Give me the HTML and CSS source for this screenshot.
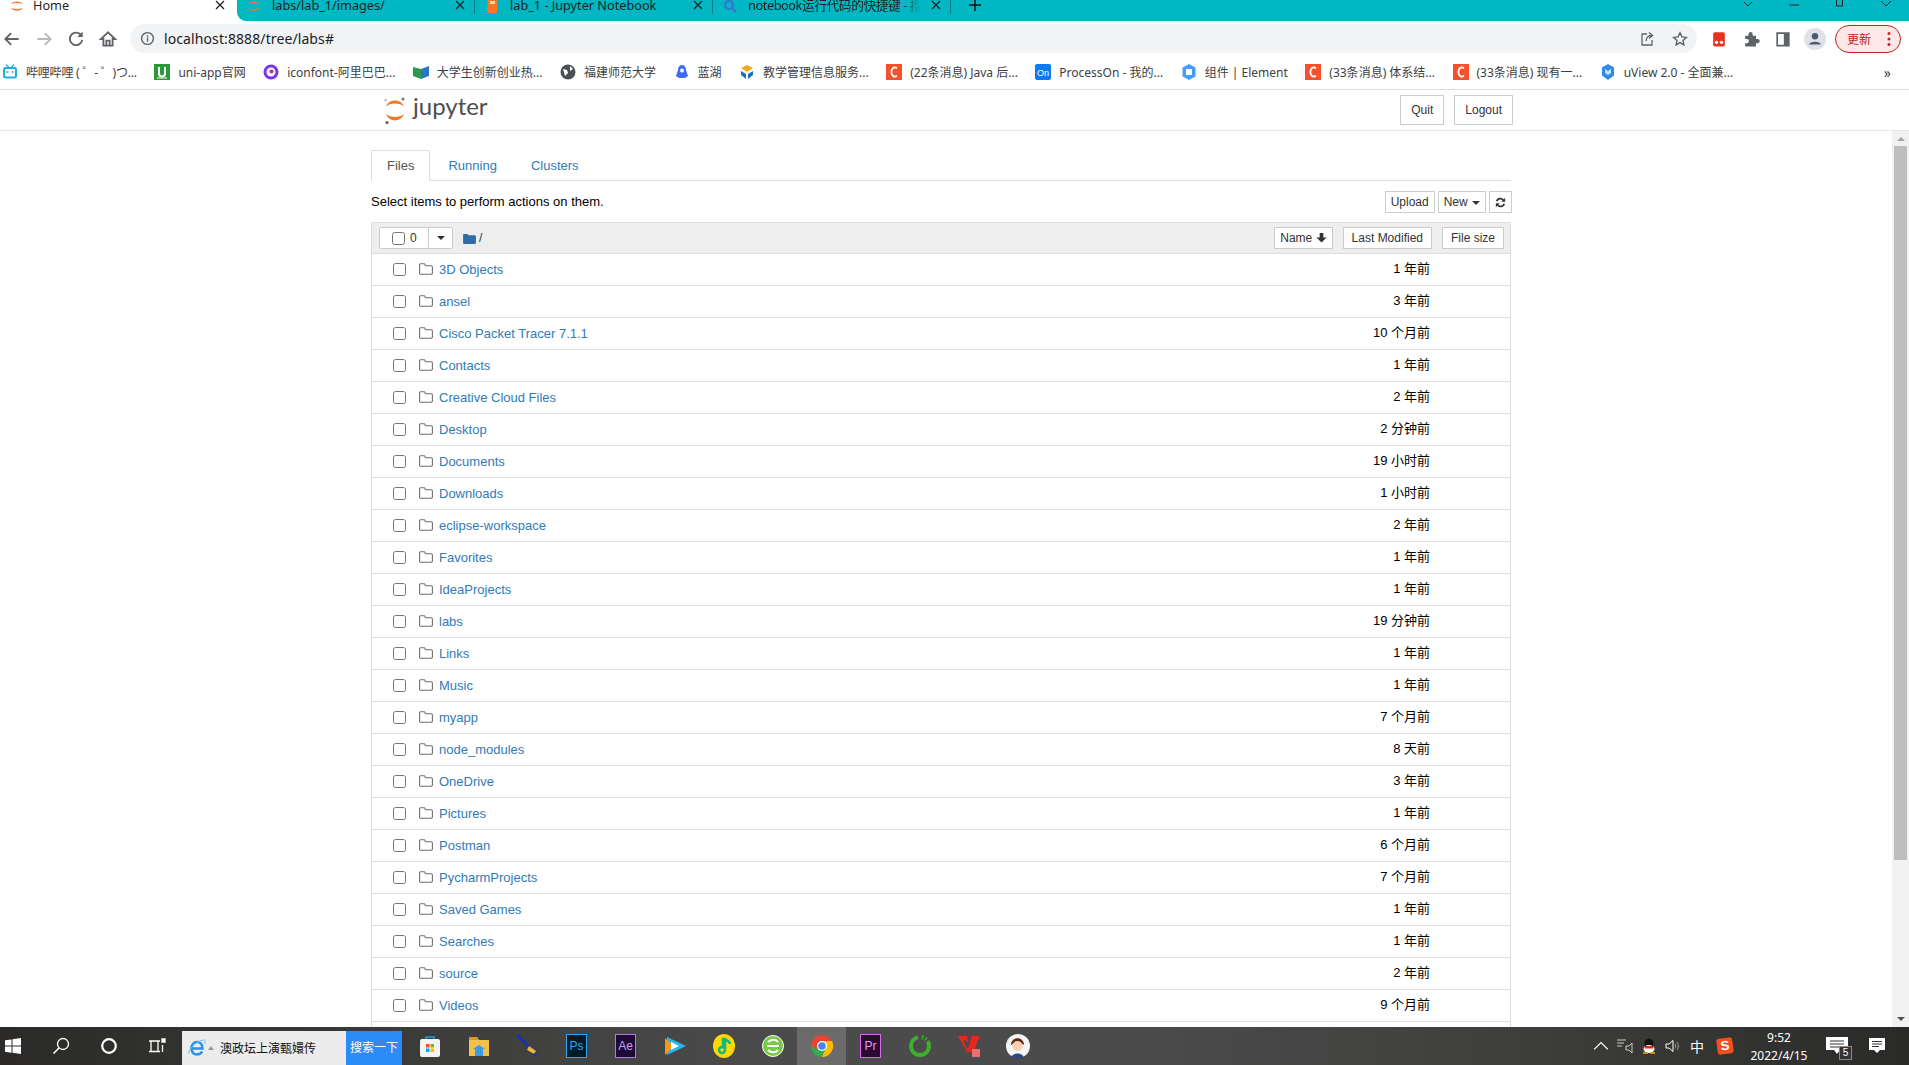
FILE: index.html
```html
<!DOCTYPE html>
<html lang="zh">
<head>
  <meta charset="UTF-8" />
  <title>Home</title>
  <link rel="stylesheet" href="styles.css">
</head>
<body>

  <!-- shared icons -->
  <svg class="sprite">
    <symbol id="close" viewBox="0 0 10 10"><path d="M1 1l8 8M9 1l-8 8" fill="none" stroke="currentColor" stroke-width="1.3"/></symbol>
    <symbol id="folder" viewBox="0 0 14 12"><path d="M.6 2.5V10a1.2 1.2 0 0 0 1.2 1.3h10.4a1.2 1.2 0 0 0 1.2-1.3V4a1.2 1.2 0 0 0-1.2-1.2H6.6L5.4.7H1.8A1.2 1.2 0 0 0 .6 2.5z" fill="none" stroke="currentColor" stroke-width="1.1"/></symbol>
    <symbol id="cfav" viewBox="0 0 16 16"><rect width="16" height="16" fill="#f4512c"/><path d="M11 4.2C8.6 2.6 5.4 3.6 5.4 8s3.2 5.4 5.6 3.8" fill="none" stroke="#fff" stroke-width="1.8"/></symbol>
    <symbol id="jup" viewBox="0 0 16 16"><path d="M2 6.4C4 2.6 12 2.6 14 6.4 11 4.6 5 4.6 2 6.4zM2 9.8C5 11.6 11 11.6 14 9.8 12 13.6 4 13.6 2 9.8z" fill="#f37726"/></symbol>
  </svg>

  <div class="tabstrip">
    <div class="tab tab-active">
      <svg class="fav"><use href="#jup"/></svg>
      <span class="tab-title">Home</span>
      <svg class="tab-close"><use href="#close"/></svg>
    </div>
    <div class="tab-rest">
      <div class="tab tab-sep">
        <svg class="fav"><use href="#jup"/></svg>
        <span class="tab-title">labs/lab_1/images/</span>
        <svg class="tab-close"><use href="#close"/></svg>
      </div>
      <div class="tab tab-sep">
        <svg class="fav" viewBox="0 0 16 16"><path d="M4 1h9v14H3z" fill="#f37726"/><path d="M6 3h5v3H6z" fill="#fbd38a"/></svg>
        <span class="tab-title">lab_1 - Jupyter Notebook</span>
        <svg class="tab-close"><use href="#close"/></svg>
      </div>
      <div class="tab tab-sep">
        <svg class="fav" viewBox="0 0 16 16"><circle cx="7" cy="7" r="4" fill="none" stroke="#3b6fd8" stroke-width="2"/><path d="M10 10l4 4" stroke="#3b6fd8" stroke-width="2"/></svg>
        <span class="tab-title tab-fade">notebook运行代码的快捷键 - 搜索</span>
        <svg class="tab-close"><use href="#close"/></svg>
      </div>
      <svg class="newtab" viewBox="0 0 12 12"><path d="M6 0v12M0 6h12" stroke="#111" stroke-width="1.5"/></svg>
      <div class="winctl">
        <svg viewBox="0 0 12 12"><path d="M2 2l4 4 4-4" fill="none" stroke="#222"/></svg>
        <svg viewBox="0 0 12 12"><path d="M1 5h10" stroke="#222"/></svg>
        <svg viewBox="0 0 12 12"><path d="M2.500 0v6h6V0M4 0V-1" fill="none" stroke="#222"/></svg>
        <svg viewBox="0 0 12 12"><path d="M1 6l5-5 5 5" fill="none" stroke="#222" transform="rotate(180 6 3.500)"/></svg>
      </div>
    </div>
  </div>

  <div class="toolbar">
    <svg class="navbtn" viewBox="0 0 24 24"><path d="M20 12H5m6-7l-7 7 7 7" fill="none" stroke="#5f6368" stroke-width="2.200"/></svg>
    <svg class="navbtn" viewBox="0 0 24 24"><path d="M4 12h15m-6-7l7 7-7 7" fill="none" stroke="#b6b8ba" stroke-width="2.200"/></svg>
    <svg class="navbtn" viewBox="0 0 24 24"><path d="M18.500 8A7.500 7.500 0 1 0 19.500 13" fill="none" stroke="#5f6368" stroke-width="2.200"/><path d="M20 3v6.500h-6.500z" fill="#5f6368"/></svg>
    <svg class="navbtn" viewBox="0 0 24 24"><path d="M12 4L3.500 12H6.500v8h11v-8H20.500zM10 20v-6h4v6" fill="none" stroke="#5f6368" stroke-width="2.200"/></svg>
    <div class="omnibox">
      <svg class="omni-info" viewBox="0 0 16 16"><circle cx="8" cy="8" r="6.300" fill="none" stroke="#5f6368" stroke-width="1.500"/><path d="M8 7v4.500M8 4.500v1.500" stroke="#5f6368" stroke-width="1.500"/></svg>
      <span class="omni-url">localhost:8888/tree/labs#</span>
      <svg class="omni-act" viewBox="0 0 16 16"><path d="M8 3H3v11h10V9M7 10c0-4 3-5.500 5.500-5.500M10 1.500l3.500 3-3.500 3" fill="none" stroke="#5f6368" stroke-width="1.300"/></svg>
      <svg class="omni-act" viewBox="0 0 16 16"><path d="M8 1.800l1.900 4.100 4.400.5-3.300 3 .9 4.400L8 11.600l-3.900 2.200.9-4.400-3.300-3 4.400-.5z" fill="none" stroke="#5f6368" stroke-width="1.400"/></svg>
    </div>
    <svg class="navbtn navbtn-first" viewBox="0 0 24 24"><rect x="5" y="4" width="14" height="17" rx="2" fill="#e8321f"/><circle cx="9" cy="16" r="2" fill="#fff"/><circle cx="15" cy="16" r="2" fill="#fff"/></svg>
    <svg class="navbtn" viewBox="0 0 24 24"><path d="M5 8h4V6a2.500 2.500 0 0 1 5 0v2h4v4h2a2.500 2.500 0 0 1 0 5h-2v4H5v-4h2a2.500 2.500 0 0 0 0-5H5z" fill="#5f6368"/></svg>
    <svg class="navbtn" viewBox="0 0 24 24"><path d="M5 5h14v15H5z" fill="none" stroke="#5f6368" stroke-width="2"/><path d="M13 5h6v15h-6z" fill="#5f6368"/></svg>
    <svg class="navbtn navbtn-avatar" viewBox="0 0 24 24"><circle cx="12" cy="12" r="12" fill="#dee1e6"/><circle cx="12" cy="9" r="3.500" fill="#4e5a6b"/><path d="M5.500 18c1-4 12-4 13 0z" fill="#4e5a6b"/></svg>
    <div class="update-pill">
      <span>更新</span>
      <svg viewBox="0 0 4 16"><circle cx="2" cy="2.500" r="1.500"/><circle cx="2" cy="8" r="1.500"/><circle cx="2" cy="13.500" r="1.500"/></svg>
    </div>
  </div>

  <div class="bookmarks">
    <a class="bm bm-tight"><svg viewBox="0 0 16 16"><path d="M4 .500l2.500 2.500M12 .500L9.500 3" stroke="#23ade5" stroke-width="1.300"/><rect x="1" y="3" width="14" height="11.500" rx="2.500" fill="#23ade5"/><rect x="3" y="5" width="10" height="7.500" rx="1" fill="#fff"/><circle cx="5.500" cy="8" r="1" fill="#23ade5"/><circle cx="10.500" cy="8" r="1" fill="#23ade5"/></svg>哔哩哔哩 ( ゜- ゜)つ...</a>
    <a class="bm"><svg viewBox="0 0 16 16"><rect width="16" height="16" fill="#2b9939"/><path d="M5 3v6.500a3 3 0 0 0 6 0V3" fill="none" stroke="#fff" stroke-width="2"/><path d="M3 14h10" stroke="#fff"/></svg>uni-app官网</a>
    <a class="bm"><svg viewBox="0 0 16 16"><circle cx="8" cy="8" r="7.500" fill="#7a35e8"/><circle cx="8" cy="8" r="4.500" fill="#fff"/><circle cx="8.500" cy="7.500" r="2" fill="#d4237a"/></svg>iconfont-阿里巴巴...</a>
    <a class="bm"><svg viewBox="0 0 16 16"><path d="M0 3l8 2v10l-8-3z" fill="#2d9a4a"/><path d="M8 5l8-3v10l-8 3z" fill="#2a76c6"/></svg>大学生创新创业热...</a>
    <a class="bm"><svg viewBox="0 0 16 16"><circle cx="8" cy="8" r="7.500" fill="#4a4f55"/><path d="M3 5l4 1 1 3-3 3zM10 2l3 3-3 2z" fill="#fff"/></svg>福建师范大学</a>
    <a class="bm"><svg viewBox="0 0 16 16"><path d="M8 1c3 0 4 3 4 5l2 6-3 2H5l-3-2 2-6c0-2 1-5 4-5z" fill="#3d6df2"/><circle cx="8" cy="6.500" r="2" fill="#fff"/></svg>蓝湖</a>
    <a class="bm"><svg viewBox="0 0 16 16"><path d="M8 1l6 3-6 4-6-4z" fill="#f2a81d"/><path d="M2 7l5 3v5L2 11z" fill="#1d6fc4"/><path d="M14 7l-5 3v5l5-4z" fill="#1d6fc4"/></svg>教学管理信息服务...</a>
    <a class="bm"><svg><use href="#cfav"/></svg>(22条消息) Java 后...</a>
    <a class="bm"><svg viewBox="0 0 16 16"><rect width="16" height="16" rx="2" fill="#0c7bf3"/><text x="8" y="11.500" class="bm-on">On</text></svg>ProcessOn - 我的...</a>
    <a class="bm"><svg viewBox="0 0 16 16"><path d="M8 0l6.500 3.500v9L8 16l-6.500-3.500v-9z" fill="#409eff"/><path d="M5 5h6v6H5z" fill="#fff"/></svg>组件 | Element</a>
    <a class="bm"><svg><use href="#cfav"/></svg>(33条消息) 体系结...</a>
    <a class="bm"><svg><use href="#cfav"/></svg>(33条消息) 现有一...</a>
    <a class="bm"><svg viewBox="0 0 16 16"><path d="M8 0l6 3.500v8L8 16l-6-4.500v-8z" fill="#2f8ce8"/><path d="M5 5l3 2 3-2v4l-3 2-3-2z" fill="#bfe3ff"/></svg>uView 2.0 - 全面兼...</a>
    <span class="bm-more">»</span>
  </div>

  <div class="site">
    <header class="site-header">
      <div class="logo">
        <svg viewBox="0 0 22 27"><path d="M2 9.500C5 1.500 17 1.500 20 9.500 16 5.500 6 5.500 2 9.500zM2 17C6 21 16 21 20 17 17 25.500 5 25.500 2 17z" fill="#f37726"/><circle cx="19" cy="2" r="1.500" fill="#767677"/><circle cx="1.500" cy="3" r="1" fill="#9e9e9e"/><circle cx="3" cy="25.500" r="1.600" fill="#616262"/></svg>
        <span class="logo-text">jupyter</span>
      </div>
      <div class="header-btns">
        <button class="btn btn-head">Quit</button>
        <button class="btn btn-head">Logout</button>
      </div>
    </header>

    <div class="site-body">
      <main class="container">
        <ul class="nav-tabs">
          <li class="active"><a>Files</a></li>
          <li><a>Running</a></li>
          <li><a>Clusters</a></li>
        </ul>

        <div class="actions">
          <span class="actions-text">Select items to perform actions on them.</span>
          <div class="actions-btns">
            <button class="btn">Upload</button>
            <button class="btn">New <i class="caret"></i></button>
            <button class="btn btn-icon"><svg viewBox="0 0 14 14"><path d="M2 5.500a5 5 0 0 1 8.500-2L12 2v4.200H7.800l1.500-1.500A3.300 3.300 0 0 0 3.800 5.800zM12 8.500a5 5 0 0 1-8.500 2L2 12V7.800h4.200L4.700 9.300a3.300 3.300 0 0 0 5.500-1.100z" fill="#333"/></svg></button>
          </div>
        </div>

        <div class="list">
          <div class="list-head">
            <div class="select-group">
              <span class="select-main"><input type="checkbox"> 0</span>
              <span class="select-drop"><i class="caret"></i></span>
            </div>
            <svg class="crumb-folder" viewBox="0 0 14 12"><path d="M0 2a1 1 0 0 1 1-1h4l1 1.500h7a1 1 0 0 1 1 1V11a1 1 0 0 1-1 1H1a1 1 0 0 1-1-1z" fill="#2f6da8"/></svg>
            <span class="crumb">/</span>
            <div class="sort-btns">
              <button class="btn">Name <svg class="sort-arrow" viewBox="0 0 12 12"><path d="M4 1h4v5h3.500L6 11.500.5 6H4z" fill="#333"/></svg></button>
              <button class="btn btn-wide">Last Modified</button>
              <button class="btn btn-wide">File size</button>
            </div>
          </div>

          <div class="row"><input type="checkbox"><svg class="folder"><use href="#folder"/></svg><a class="name">3D Objects</a><span class="when">1 年前</span></div>
          <div class="row"><input type="checkbox"><svg class="folder"><use href="#folder"/></svg><a class="name">ansel</a><span class="when">3 年前</span></div>
          <div class="row"><input type="checkbox"><svg class="folder"><use href="#folder"/></svg><a class="name">Cisco Packet Tracer 7.1.1</a><span class="when">10 个月前</span></div>
          <div class="row"><input type="checkbox"><svg class="folder"><use href="#folder"/></svg><a class="name">Contacts</a><span class="when">1 年前</span></div>
          <div class="row"><input type="checkbox"><svg class="folder"><use href="#folder"/></svg><a class="name">Creative Cloud Files</a><span class="when">2 年前</span></div>
          <div class="row"><input type="checkbox"><svg class="folder"><use href="#folder"/></svg><a class="name">Desktop</a><span class="when">2 分钟前</span></div>
          <div class="row"><input type="checkbox"><svg class="folder"><use href="#folder"/></svg><a class="name">Documents</a><span class="when">19 小时前</span></div>
          <div class="row"><input type="checkbox"><svg class="folder"><use href="#folder"/></svg><a class="name">Downloads</a><span class="when">1 小时前</span></div>
          <div class="row"><input type="checkbox"><svg class="folder"><use href="#folder"/></svg><a class="name">eclipse-workspace</a><span class="when">2 年前</span></div>
          <div class="row"><input type="checkbox"><svg class="folder"><use href="#folder"/></svg><a class="name">Favorites</a><span class="when">1 年前</span></div>
          <div class="row"><input type="checkbox"><svg class="folder"><use href="#folder"/></svg><a class="name">IdeaProjects</a><span class="when">1 年前</span></div>
          <div class="row"><input type="checkbox"><svg class="folder"><use href="#folder"/></svg><a class="name">labs</a><span class="when">19 分钟前</span></div>
          <div class="row"><input type="checkbox"><svg class="folder"><use href="#folder"/></svg><a class="name">Links</a><span class="when">1 年前</span></div>
          <div class="row"><input type="checkbox"><svg class="folder"><use href="#folder"/></svg><a class="name">Music</a><span class="when">1 年前</span></div>
          <div class="row"><input type="checkbox"><svg class="folder"><use href="#folder"/></svg><a class="name">myapp</a><span class="when">7 个月前</span></div>
          <div class="row"><input type="checkbox"><svg class="folder"><use href="#folder"/></svg><a class="name">node_modules</a><span class="when">8 天前</span></div>
          <div class="row"><input type="checkbox"><svg class="folder"><use href="#folder"/></svg><a class="name">OneDrive</a><span class="when">3 年前</span></div>
          <div class="row"><input type="checkbox"><svg class="folder"><use href="#folder"/></svg><a class="name">Pictures</a><span class="when">1 年前</span></div>
          <div class="row"><input type="checkbox"><svg class="folder"><use href="#folder"/></svg><a class="name">Postman</a><span class="when">6 个月前</span></div>
          <div class="row"><input type="checkbox"><svg class="folder"><use href="#folder"/></svg><a class="name">PycharmProjects</a><span class="when">7 个月前</span></div>
          <div class="row"><input type="checkbox"><svg class="folder"><use href="#folder"/></svg><a class="name">Saved Games</a><span class="when">1 年前</span></div>
          <div class="row"><input type="checkbox"><svg class="folder"><use href="#folder"/></svg><a class="name">Searches</a><span class="when">1 年前</span></div>
          <div class="row"><input type="checkbox"><svg class="folder"><use href="#folder"/></svg><a class="name">source</a><span class="when">2 年前</span></div>
          <div class="row"><input type="checkbox"><svg class="folder"><use href="#folder"/></svg><a class="name">Videos</a><span class="when">9 个月前</span></div>
          <div class="row"></div>
        </div>
      </main>

      <div class="scrollbar">
        <i class="arrow-up"></i>
        <div class="thumb"></div>
        <i class="arrow-down"></i>
      </div>
    </div>
  </div>

  <footer class="taskbar">
    <div class="start">
      <svg viewBox="0 0 16 16"><path d="M0 2.300l6.500-.9v6.200H0zM7.500 1.300L16 0v7.600H7.500zM0 8.500h6.500v6.200L0 13.800zM7.500 8.500H16V16l-8.500-1.200z" fill="#fff"/></svg>
    </div>
    <div class="task"><svg viewBox="0 0 18 18"><circle cx="11" cy="7" r="5.500" fill="none" stroke="#fff" stroke-width="1.300"/><path d="M7 11l-5.500 5.500" stroke="#fff" stroke-width="1.600"/></svg></div>
    <div class="task"><svg viewBox="0 0 18 18"><circle cx="9" cy="9" r="6.800" fill="none" stroke="#fff" stroke-width="2.200"/></svg></div>
    <div class="task"><svg viewBox="0 0 18 18"><path d="M1 4h11M1 14.500h11M3 4v10.500h7V4" fill="none" stroke="#fff" stroke-width="1.300"/><path d="M14 2h3v3h-3zM14.500 8v7" stroke="#fff" stroke-width="1.300" fill="#fff"/></svg></div>

    <div class="searchbox">
      <div class="search-input">
        <svg class="ie-logo" viewBox="0 0 18 18"><path d="M3.500 9.500h11C14.500 5 12 3 9 3 5.500 3 3.500 6 3.500 9.500S5.500 15.500 9 15.500c2.500 0 4-1 5-3" fill="none" stroke="#2a90e8" stroke-width="2.600"/><path d="M1 15C-.5 12 6 3 15 1c2-.5 3 1 1.500 4" fill="none" stroke="#6cc0f5"/></svg>
        <i class="search-tri"></i>
        <span class="search-text">澳政坛上演甄嬛传</span>
      </div>
      <span class="search-btn">搜索一下</span>
    </div>

    <div class="task"><svg viewBox="0 0 24 24"><path d="M8 6V3h8v3" fill="none" stroke="#1ba1e2" stroke-width="1.500"/><rect x="2" y="5" width="20" height="18" rx="2" fill="#f3f3f3"/><path d="M8 10h3.500v3.500H8z" fill="#f25022"/><path d="M12.500 10H16v3.500h-3.500z" fill="#7fba00"/><path d="M8 14.500h3.500V18H8z" fill="#00a4ef"/><path d="M12.500 14.500H16V18h-3.500z" fill="#ffb900"/></svg></div>
    <div class="task"><svg viewBox="0 0 24 24"><path d="M2 3h8l2 3h10v16H2z" fill="#f0c24b"/><path d="M2 3h8l2 3H2z" fill="#d9992a"/><path d="M8 15h8v7H8z" fill="#3d9ae8"/><path d="M6 15l6-4 6 4z" fill="#3d9ae8"/></svg></div>
    <div class="task"><svg viewBox="0 0 24 24"><path d="M1 1l14 14" stroke="#1d2fb5" stroke-width="2.500"/><path d="M13 12l7 5-2 3-7-4z" fill="#e8b53a"/><path d="M18 19l4 2-2 2-3-2z" fill="#1d2fb5"/></svg></div>
    <div class="task"><span class="app-square app-ps">Ps</span></div>
    <div class="task"><span class="app-square app-ae">Ae</span></div>
    <div class="task"><svg viewBox="0 0 24 24"><path d="M4 3l19 9-19 9z" fill="#2bb5f0"/><path d="M2 4l9 8-9 9z" fill="#f39c12"/><path d="M8 8l8 4-8 4z" fill="#fff"/></svg></div>
    <div class="task"><svg viewBox="0 0 24 24"><ellipse cx="12" cy="12" rx="11" ry="12" fill="#ffd800"/><path d="M13 5v11a3 3 0 1 1-2-2.800V5zM13 5c2 2 5 2 5 5" fill="none" stroke="#12b886" stroke-width="2.500"/></svg></div>
    <div class="task"><svg viewBox="0 0 24 24"><circle cx="12" cy="12" r="10.500" fill="#7ac943" stroke="#fff"/><path d="M6 12h12M7 8c3-3 8-3 10 0M7 16c3 3 8 3 10 0" fill="none" stroke="#fff" stroke-width="2"/></svg></div>
    <div class="task task-on"><svg viewBox="0 0 24 24"><circle cx="12" cy="12" r="11" fill="#ea4335"/><path d="M12 12L2 17a11 11 0 0 0 10 6z" fill="#34a853"/><path d="M12 7h10a11 11 0 0 1-10 16z" fill="#fbbc05"/><path d="M2.500 6l5 10 4.500-4z" fill="#ea4335"/><path d="M1 12a11 11 0 0 0 11 11l3-7H9z" fill="#34a853"/><circle cx="12" cy="12" r="5" fill="#fff"/><circle cx="12" cy="12" r="3.800" fill="#4285f4"/></svg></div>
    <div class="task"><span class="app-square app-pr">Pr</span></div>
    <div class="task"><svg viewBox="0 0 24 24"><circle cx="12" cy="12" r="9" fill="none" stroke="#3fae2a" stroke-width="4" stroke-dasharray="40 4 1.500 2 1.500 2"/></svg></div>
    <div class="task"><svg viewBox="0 0 24 24"><path d="M1 2h9l2 9 3-9h8l-7 16h-6z" fill="#e7261c"/><path d="M6 5l3 8 2 2 2-7h-3z" fill="#4a4a4a"/><rect x="15" y="15" width="8" height="8" rx="1" fill="#f26d6d"/></svg></div>
    <div class="task"><svg viewBox="0 0 24 24"><circle cx="12" cy="12" r="12" fill="#f4f4f4"/><path d="M5 11c0-9 13-9 13 0-4-3-9-3-13 0z" fill="#5b2c12"/><circle cx="11.500" cy="12" r="5" fill="#f5cfae"/><path d="M5 24c1-6 12-6 13 0z" fill="#2d4a7a"/></svg></div>

    <div class="tray">
      <div class="tray-cell"><svg viewBox="0 0 14 14"><path d="M1 10l6-6 6 6" fill="none" stroke="#fff" stroke-width="1.100"/></svg></div>
      <div class="tray-cell"><svg viewBox="0 0 16 16"><path d="M0 2h9M0 5h7M0 8h5" stroke="#ccc"/><path d="M9 8h3l3-3v10l-3-3H9z" fill="none" stroke="#ccc"/></svg></div>
      <div class="tray-cell"><svg viewBox="0 0 16 16"><ellipse cx="8" cy="6" rx="4.500" ry="5.500" fill="#111"/><ellipse cx="8" cy="11" rx="5.500" ry="4" fill="#fff"/><path d="M3 8h10l-1 2.500H4z" fill="#e8261c"/><path d="M2 15h5M9 15h5" stroke="#f0a81d" stroke-width="1.500"/></svg></div>
      <div class="tray-cell"><svg viewBox="0 0 16 16"><path d="M1 6h3l4-3.500v11L4 10H1z" fill="none" stroke="#fff"/><path d="M10 5.500c1 1.500 1 3.500 0 5M12 4c1.800 2.500 1.800 5.500 0 8" fill="none" stroke="#999"/></svg></div>
      <div class="tray-cell tray-ime">中</div>
      <div class="tray-cell tray-sogou"><span class="sogou">S</span></div>
      <div class="clock">
        <span>9:52</span>
        <span>2022/4/15</span>
      </div>
      <div class="tray-msg">
        <svg viewBox="0 0 22 18"><path d="M0 0h22v13H14l-3 4-3-4H0z" fill="#fff"/><path d="M4 4h14M4 7h14M4 10h9" stroke="#333"/></svg>
        <span class="msg-badge">5</span>
      </div>
      <div class="tray-notif">
        <svg viewBox="0 0 16 16"><path d="M0 0h16v12h-5l-3 3-3-3H0z" fill="#fff"/><path d="M3 3.500h10M3 6h10M3 8.500h7" stroke="#333"/></svg>
      </div>
    </div>
  </footer>

</body>
</html>
```

FILE: styles.css
```css
* {
  box-sizing: border-box;
}
html, body {
  height: 100%;
}
body {
  margin: 0;
  display: flex;
  flex-direction: column;
  overflow: hidden;
  font-family: "Liberation Sans", "Noto Sans CJK SC", sans-serif;
  font-size: 13px;
  color: #000;
  background: #fff;
}
.sprite {
  display: none;
}

/* browser tabs */
.tabstrip {
  height: 21px;
  flex: none;
  display: flex;
  background: #fff;
  overflow: hidden;
  font-family: "Noto Sans", "Noto Sans CJK SC", sans-serif;
  font-size: 12.7px;
  color: #1f1f1f;
}
.tab-rest {
  flex: 1;
  display: flex;
  background: #00b7c3;
  border-bottom-left-radius: 9px;
}
.tab {
  width: 238px;
  height: 21px;
  flex: none;
  display: flex;
  align-items: flex-start;
  padding: 0 10px 0 9px;
  gap: 10px;
  position: relative;
}
.tab-active {
  width: 237px;
  padding-right: 12px;
  gap: 8px;
}
.tab-sep::after {
  content: "";
  position: absolute;
  top: 0;
  right: 0;
  width: 1px;
  height: 14px;
  background: #0a7f88;
}
.fav {
  width: 16px;
  height: 16px;
  flex: none;
  margin-top: -2px;
}
.tab-title {
  flex: 1;
  white-space: nowrap;
  overflow: hidden;
  line-height: 10px;
  padding-bottom: 6px;
}
.tab-fade {
  letter-spacing: -0.4px;
  -webkit-mask-image: linear-gradient(90deg, #000 88%, transparent);
}
.tab-close {
  width: 10px;
  height: 10px;
  flex: none;
  color: #222;
}
.newtab {
  width: 12px;
  height: 12px;
  margin: -1px 0 0 18px;
  flex: none;
}
.winctl {
  margin-left: auto;
  width: 190px;
  display: flex;
  gap: 34px;
  padding-right: 17px;
  justify-content: flex-end;
}
.winctl svg {
  width: 12px;
  height: 12px;
  overflow: visible;
}

/* address bar */
.toolbar {
  height: 35px;
  flex: none;
  display: flex;
  align-items: center;
  gap: 8px;
  padding-right: 8px;
  background: #fff;
}
.navbtn {
  width: 24px;
  height: 24px;
  flex: none;
  padding: 2px;
}
.navbtn-first {
  margin-left: 2px;
}
.navbtn-avatar {
  padding: 1px;
}
.omnibox {
  flex: 1;
  height: 29px;
  margin-left: 2px;
  display: flex;
  align-items: center;
  background: #f1f3f4;
  border-radius: 15px;
  padding: 0 9px 0 10px;
}
.omni-info {
  width: 15px;
  height: 15px;
  margin-right: 9px;
}
.omni-url {
  flex: 1;
  font-family: "Noto Sans", sans-serif;
  font-size: 14px;
  letter-spacing: 0.1px;
  color: #202124;
}
.omni-act {
  width: 16px;
  height: 16px;
  margin-left: 17px;
}
.update-pill {
  width: 66px;
  height: 28px;
  flex: none;
  display: flex;
  align-items: center;
  justify-content: space-between;
  padding: 0 9px 0 11px;
  border: 1px solid #c5221f;
  border-radius: 14px;
  background: #fce8e6;
  color: #c5221f;
  font-size: 12px;
}
.update-pill svg {
  width: 4px;
  height: 16px;
  fill: #c5221f;
}

/* bookmarks */
.bookmarks {
  height: 34px;
  flex: none;
  display: flex;
  align-items: center;
  gap: 17.5px;
  padding: 0 0 1px 2px;
  background: #fff;
  border-bottom: 1px solid #dadce0;
  font-family: "Noto Sans", "Noto Sans CJK SC", sans-serif;
  font-size: 12px;
  color: #3c4043;
  white-space: nowrap;
}
.bm {
  display: flex;
  align-items: center;
  gap: 8px;
}
.bm-tight {
  letter-spacing: -0.2px;
}
.bm svg {
  width: 16px;
  height: 16px;
  flex: none;
}
.bm-on {
  font-family: "Liberation Sans", sans-serif;
  font-size: 9px;
  fill: #fff;
  text-anchor: middle;
}
.bm-more {
  margin-left: auto;
  padding-right: 18px;
  font-size: 14px;
}

/* jupyter page */
.site {
  flex: 1;
  min-height: 0;
  display: flex;
  flex-direction: column;
}
.site-header {
  height: 41px;
  flex: none;
  padding: 0 396px 0 384px;
  display: flex;
  align-items: center;
  justify-content: space-between;
  border-bottom: 1px solid #e7e7e7;
}
.logo {
  display: flex;
  align-items: center;
  gap: 7px;
}
.logo svg {
  width: 22px;
  height: 27px;
}
.logo-text {
  font-family: "Lato", sans-serif;
  font-size: 24px;
  line-height: 24px;
  margin-top: -8px;
  color: #4e4e4e;
}
.header-btns {
  display: flex;
  gap: 10px;
}
.btn {
  height: 22px;
  padding: 0 5px;
  border: 1px solid #ccc;
  background: #fff;
  color: #333;
  font-family: inherit;
  font-size: 12px;
  white-space: nowrap;
}
.btn-wide {
  padding: 0 8px;
}
.btn-head {
  height: 30px;
  padding: 0 10px;
}
.site-body {
  flex: 1;
  min-height: 0;
  display: flex;
}
.container {
  flex: 1;
  min-width: 0;
  overflow: hidden;
  padding: 19px 381px 0 371px;
}
.nav-tabs {
  list-style: none;
  margin: 0;
  padding: 0;
  height: 31px;
  display: flex;
  gap: 2px;
  border-bottom: 1px solid #ddd;
}
.nav-tabs a {
  display: block;
  height: 31px;
  padding: 0 16px;
  line-height: 31px;
  color: #337ab7;
}
.nav-tabs .active a {
  border: 1px solid #ddd;
  border-bottom-color: #fff;
  border-radius: 2px 2px 0 0;
  padding: 0 15px;
  line-height: 29px;
  color: #555;
  background: #fff;
}
.actions {
  margin-top: 10px;
  height: 22px;
  display: flex;
  align-items: center;
  justify-content: space-between;
}
.actions-text {
  padding-bottom: 1px;
}
.actions-btns {
  display: flex;
  gap: 3px;
  margin-right: -1px;
}
.btn-icon {
  width: 23px;
  padding: 0;
  display: flex;
  align-items: center;
  justify-content: center;
}
.btn-icon svg {
  width: 13px;
  height: 13px;
}
.caret {
  display: inline-block;
  width: 0;
  height: 0;
  margin-left: 1px;
  vertical-align: middle;
  border-top: 4px solid #333;
  border-left: 4px solid transparent;
  border-right: 4px solid transparent;
}

/* file list */
.list {
  margin-top: 9px;
  border: 1px solid #ddd;
  border-bottom: 0;
  border-radius: 2px 2px 0 0;
}
.list-head {
  height: 31px;
  display: flex;
  align-items: center;
  padding: 0 6px 0 7px;
  background: #eee;
  border-bottom: 1px solid #ddd;
}
.select-group {
  display: flex;
  height: 22px;
  border: 1px solid #ccc;
  border-radius: 2px;
  background: #fff;
  font-size: 12px;
  color: #333;
}
.select-main {
  width: 49px;
  display: flex;
  align-items: center;
  gap: 5px;
  padding-left: 12px;
  border-right: 1px solid #ccc;
}
.select-main input {
  margin: 0;
}
.select-drop {
  width: 23px;
  display: flex;
  align-items: center;
  justify-content: center;
}
.crumb-folder {
  width: 13px;
  height: 11px;
  margin-left: 10px;
}
.crumb {
  margin-left: 3px;
  color: #333;
  font-size: 12px;
}
.sort-btns {
  margin-left: auto;
  display: flex;
  gap: 10px;
}
.sort-arrow {
  width: 11px;
  height: 11px;
  vertical-align: -1px;
}
.row {
  height: 32px;
  display: flex;
  align-items: center;
  padding-left: 21px;
  border-bottom: 1px solid #ddd;
}
.row input {
  width: 13px;
  height: 13px;
  margin: 0;
  flex: none;
}
.folder {
  width: 14px;
  height: 12px;
  margin: -1px 0 0 13px;
  color: #6f6f6f;
}
.name {
  margin-left: 6px;
  color: #337ab7;
}
.when {
  margin-left: auto;
  margin-right: 80px;
  padding-bottom: 4px;
}

/* page scrollbar */
.scrollbar {
  width: 17px;
  flex: none;
  display: flex;
  flex-direction: column;
  align-items: center;
  background: #f1f1f1;
  padding: 0 2px;
}
.arrow-up, .arrow-down {
  flex: none;
  width: 0;
  height: 0;
  border-left: 4px solid transparent;
  border-right: 4px solid transparent;
}
.arrow-up {
  margin: 6px 0 5px;
  border-bottom: 4px solid #a3a3a3;
}
.arrow-down {
  margin: auto 0 6px;
  border-top: 4px solid #505050;
}
.thumb {
  width: 13px;
  height: 714px;
  background: #bdbdbd;
}

/* windows taskbar */
.taskbar {
  height: 38px;
  flex: none;
  display: flex;
  align-items: center;
  background: linear-gradient(90deg, #2b2a28 0, #3a3a38 20%, #4b4b4b 40%, #4b4b4b 60%, #3e3e3c 80%, #2a2a28 100%);
  color: #fff;
}
.start {
  width: 37px;
  height: 100%;
  flex: none;
  display: flex;
  align-items: center;
  padding-left: 5px;
}
.start svg {
  width: 16px;
  height: 16px;
}
.task {
  width: 49px;
  height: 100%;
  flex: none;
  display: flex;
  align-items: center;
  justify-content: center;
}
.task svg {
  width: 24px;
  height: 24px;
}
.start + .task, .start + .task + .task, .start + .task + .task + .task {
  width: 48px;
}
.start + .task svg, .start + .task + .task svg, .start + .task + .task + .task svg {
  width: 18px;
  height: 18px;
}
.task-on {
  background: #6b6b6b;
}
.searchbox {
  width: 220px;
  height: 34px;
  margin: 3px 3px 0 1px;
  flex: none;
  display: flex;
  font-size: 12px;
}
.search-input {
  flex: 1;
  display: flex;
  align-items: center;
  background: #ececec;
  color: #111;
  padding-left: 6px;
}
.ie-logo {
  width: 18px;
  height: 18px;
  overflow: visible;
}
.search-tri {
  width: 0;
  height: 0;
  margin: 0 6px 0 2px;
  border-bottom: 4px solid #999;
  border-left: 3px solid transparent;
  border-right: 3px solid transparent;
}
.search-btn {
  width: 56px;
  background: #2b8cf7;
  line-height: 34px;
  text-align: center;
}
.app-square {
  width: 21px;
  height: 24px;
  display: flex;
  align-items: center;
  justify-content: center;
  border: 1px solid;
  font-size: 12px;
  background: #001d26;
}
.app-ps {
  color: #2fa3f5;
  border-color: #2fa3f5;
}
.app-ae {
  color: #c9a0f2;
  border-color: #a77fe0;
  background: #1f0a35;
}
.app-pr {
  color: #e39aef;
  border-color: #d56be5;
  background: #2a0a35;
}
.tray {
  margin-left: auto;
  display: flex;
  align-items: center;
  height: 100%;
  padding-right: 13px;
}
.tray-cell {
  width: 24px;
  display: flex;
  justify-content: center;
}
.tray-cell svg {
  width: 16px;
  height: 16px;
}
.tray-ime {
  font-size: 14px;
}
.tray-sogou {
  margin: 0 4px;
}
.sogou {
  width: 16px;
  height: 16px;
  border-radius: 3px;
  background: #f0521d;
  font-weight: bold;
  text-align: center;
  line-height: 16px;
  transform: rotate(-8deg);
}
.clock {
  width: 76px;
  display: flex;
  flex-direction: column;
  align-items: center;
  gap: 3px;
  font-family: "Noto Sans", sans-serif;
  font-size: 12px;
  line-height: 15px;
}
.tray-msg {
  width: 40px;
  position: relative;
  display: flex;
  justify-content: center;
}
.tray-msg svg {
  width: 22px;
  height: 18px;
}
.msg-badge {
  position: absolute;
  right: 5px;
  top: 9px;
  width: 13px;
  height: 14px;
  background: #333;
  border: 1px solid #888;
  font-size: 10px;
  line-height: 12px;
  text-align: center;
}
.tray-notif {
  width: 39px;
  display: flex;
  justify-content: center;
}
.tray-notif svg {
  width: 16px;
  height: 16px;
}
```
